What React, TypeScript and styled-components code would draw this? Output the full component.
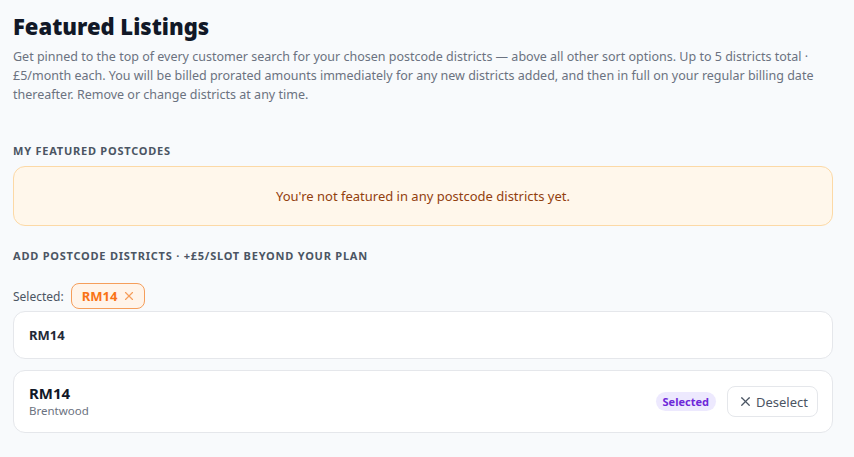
import React from "react";
import styled, { createGlobalStyle } from "styled-components";

const Global = createGlobalStyle`
  html, body { margin: 0; padding: 0; background: #f8fafc; }
  body { font-family: "Noto Sans", "Open Sans", sans-serif; color: #0f172a; }
  * { box-sizing: border-box; }
`;

const Page = styled.div`
  padding: 12px 21px 24px 13px;
  display: flex;
  flex-direction: column;
`;

const Title = styled.h1`
  margin: 0;
  font-size: 22px;
  line-height: 28px;
  font-weight: 900;
  color: #111827;
`;

const Description = styled.p`
  margin: 7px 0 0;
  font-size: 12.5px;
  line-height: 19px;
  color: #6b7280;
`;

const SectionLabel = styled.div<{ $top: number }>`
  margin-top: ${(p) => p.$top}px;
  font-size: 11px;
  line-height: 14px;
  font-weight: 700;
  letter-spacing: 0.07em;
  text-transform: uppercase;
  color: #4b5563;
`;

const Notice = styled.div`
  margin-top: 8px;
  height: 60px;
  border: 1px solid #fcd9a6;
  background: #fff7eb;
  border-radius: 12px;
  display: flex;
  align-items: center;
  justify-content: center;
  font-size: 13px;
  color: #92400e;
`;

const SelectedRow = styled.div`
  margin-top: 20px;
  display: flex;
  align-items: center;
  gap: 7px;
  font-size: 12px;
  color: #4b5563;
`;

const Chip = styled.span`
  display: inline-flex;
  align-items: center;
  gap: 5px;
  height: 26px;
  padding: 0 8px 0 10px;
  border: 1px solid #f59e5b;
  background: #fff4ea;
  border-radius: 8px;
  color: #f97316;
  font-weight: 700;
  font-size: 13px;
`;

const Input = styled.div`
  margin-top: 2px;
  height: 48px;
  background: #ffffff;
  border: 1px solid #e5e7eb;
  border-radius: 12px;
  display: flex;
  align-items: center;
  padding: 0 15px;
  font-size: 13px;
  font-weight: 700;
  color: #1f2937;
`;

const ResultCard = styled.div`
  margin-top: 11px;
  height: 63px;
  background: #ffffff;
  border: 1px solid #e5e7eb;
  border-radius: 12px;
  display: flex;
  align-items: center;
  justify-content: space-between;
  padding: 0 14px 0 15px;
`;

const ResultInfo = styled.div`
  display: flex;
  flex-direction: column;
`;

const ResultCode = styled.div`
  font-size: 15px;
  line-height: 19px;
  font-weight: 700;
  color: #111827;
`;

const ResultArea = styled.div`
  font-size: 11.5px;
  line-height: 16px;
  color: #6b7280;
`;

const Actions = styled.div`
  display: flex;
  align-items: center;
  gap: 11px;
`;

const Badge = styled.span`
  display: inline-flex;
  align-items: center;
  height: 19px;
  padding: 0 7px;
  border-radius: 999px;
  background: #ede9fe;
  color: #6d28d9;
  font-size: 11px;
  font-weight: 700;
`;

const DeselectButton = styled.button`
  display: inline-flex;
  align-items: center;
  gap: 3px;
  height: 31px;
  padding: 0 9px 0 10px;
  border: 1px solid #e5e7eb;
  border-radius: 8px;
  background: #ffffff;
  font-family: inherit;
  font-size: 13px;
  color: #4b5563;
  cursor: pointer;
`;

const XIcon = ({ size, color }: { size: number; color: string }) => (
  <svg width={size} height={size} viewBox="0 0 24 24" fill="none" stroke={color} strokeWidth={2} strokeLinecap="round">
    <path d="M18 6 6 18" />
    <path d="m6 6 12 12" />
  </svg>
);

export default function App() {
  return (
    <>
      <Global />
      <Page>
        <Title>Featured Listings</Title>
        <Description>
          Get pinned to the top of every customer search for your chosen postcode districts — above all other sort
          options. Up to 5 districts total · £5/month each. You will be billed prorated amounts immediately for any new
          districts added, and then in full on your regular billing date thereafter. Remove or change districts at any
          time.
        </Description>
        <SectionLabel $top={40}>My featured postcodes</SectionLabel>
        <Notice>You're not featured in any postcode districts yet.</Notice>
        <SectionLabel $top={23}>Add postcode districts · +£5/slot beyond your plan</SectionLabel>
        <SelectedRow>
          Selected:
          <Chip>
            RM14
            <XIcon size={14} color="#f59e5b" />
          </Chip>
        </SelectedRow>
        <Input>RM14</Input>
        <ResultCard>
          <ResultInfo>
            <ResultCode>RM14</ResultCode>
            <ResultArea>Brentwood</ResultArea>
          </ResultInfo>
          <Actions>
            <Badge>Selected</Badge>
            <DeselectButton>
              <XIcon size={15} color="#4b5563" />
              Deselect
            </DeselectButton>
          </Actions>
        </ResultCard>
      </Page>
    </>
  );
}
